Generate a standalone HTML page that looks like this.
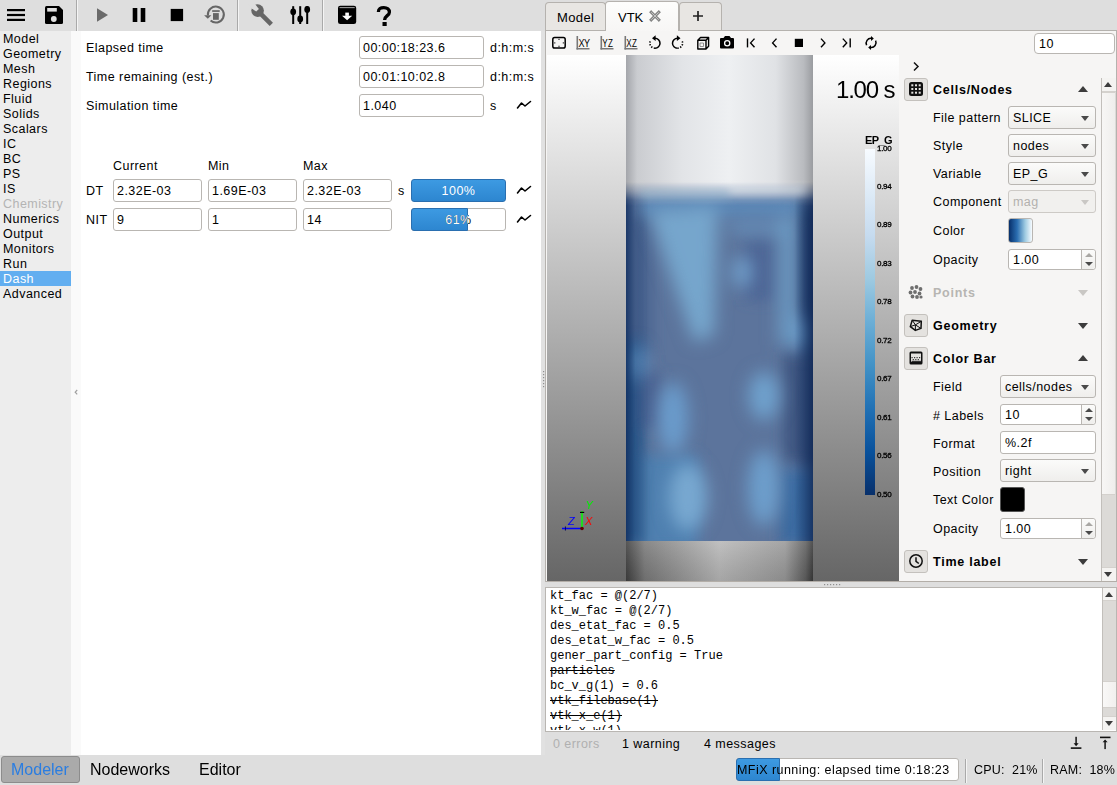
<!DOCTYPE html>
<html><head><meta charset="utf-8">
<style>
*{box-sizing:border-box;margin:0;padding:0}
html,body{width:1117px;height:785px;overflow:hidden;background:#dedede}
body{position:relative;font-family:"Liberation Sans",sans-serif;font-size:12.5px;letter-spacing:0.45px;color:#000}
.a{position:absolute}
.t{position:absolute;white-space:nowrap;line-height:15px;height:15px;margin-top:1px}
.inp{position:absolute;background:#fff;border:1px solid #b9b6b2;border-radius:3px}
.inp span{position:absolute;left:3px;top:4px;line-height:15px;white-space:nowrap}
.combo{position:absolute;border:1px solid #b9b6b2;border-radius:3px;background:linear-gradient(#fbfbfa,#efeeec)}
.combo span{position:absolute;left:4px;top:4px;line-height:15px;white-space:nowrap}
.combo i{position:absolute;right:6px;top:9px;width:0;height:0;border-left:4px solid transparent;border-right:4px solid transparent;border-top:5px solid #4a4a4a}
.spin i.u{position:absolute;right:2px;top:3px;width:0;height:0;border-left:4px solid transparent;border-right:4px solid transparent;border-bottom:4px solid #4a4a4a}
.spin.mx i.u{border-bottom-color:#a9a7a4}
.spin i.d{position:absolute;right:2px;top:12px;width:0;height:0;border-left:4px solid transparent;border-right:4px solid transparent;border-top:4px solid #4a4a4a}
.spin b{position:absolute;right:0;top:0;bottom:0;width:14px;border-left:1px solid #b9b6b2;background:linear-gradient(#fbfbfa,#efeeec);border-radius:0 3px 3px 0}
.hbtn{position:absolute;left:904px;width:24px;height:23px;border:1px solid #c4c1bd;border-radius:3px;background:#e4e2df}
.hdr{position:absolute;left:933px;font-weight:bold;line-height:15px;white-space:nowrap;letter-spacing:0.9px}
.arr-up{position:absolute;width:0;height:0;border-left:5px solid transparent;border-right:5px solid transparent;border-bottom:6px solid #3c3c3c}
.arr-dn{position:absolute;width:0;height:0;border-left:5px solid transparent;border-right:5px solid transparent;border-top:6px solid #3c3c3c}
.mono{font-family:"Liberation Mono",monospace;font-size:12px;letter-spacing:0}
svg{position:absolute;overflow:visible}
</style></head>
<body>
<!-- ===== top toolbar (left) ===== -->
<div class="a" id="tb" style="left:0;top:0;width:545px;height:31px;background:#dedede"></div>
<svg width="1117" height="31" style="left:0;top:0">
 <!-- hamburger -->
 <rect x="7" y="9" width="18" height="2.2" fill="#000"/>
 <rect x="7" y="13.9" width="18" height="2.2" fill="#000"/>
 <rect x="7" y="18.8" width="18" height="2.2" fill="#000"/>
 <!-- save -->
 <path d="M45 7.5 Q45 6 46.5 6 H59 L63 10 V22.5 Q63 24 61.5 24 H46.5 Q45 24 45 22.5 Z" fill="#000"/>
 <rect x="47.2" y="8" width="9.6" height="3.6" fill="#e0e0e0"/>
 <circle cx="53.8" cy="19" r="2.9" fill="#e0e0e0"/>
 <!-- separators -->
 <rect x="76" y="0" width="1" height="31" fill="#a9a9a9"/><rect x="77" y="0" width="1" height="31" fill="#f4f4f4"/>
 <rect x="237" y="0" width="1" height="31" fill="#a9a9a9"/><rect x="238" y="0" width="1" height="31" fill="#f4f4f4"/>
 <rect x="322" y="0" width="1" height="31" fill="#a9a9a9"/><rect x="323" y="0" width="1" height="31" fill="#f4f4f4"/>
 <!-- play -->
 <path d="M97 8.2 L108 15 L97 21.8 Z" fill="#6a6a6a"/>
 <!-- pause -->
 <rect x="132.7" y="8" width="4.6" height="14" fill="#000"/>
 <rect x="140.7" y="8" width="4.6" height="14" fill="#000"/>
 <!-- stop -->
 <rect x="170.7" y="8.9" width="12.4" height="12.2" fill="#000"/>
 <!-- reset -->
 <path d="M207.9 15.4 A8 8 0 1 1 210.6 20.6" fill="none" stroke="#666" stroke-width="2"/>
 <path d="M204.1 15.3 H211.4 L207.8 18.8 Z" fill="#666"/>
 <rect x="213" y="13.1" width="5.8" height="6.7" fill="#666"/>
 <rect x="212.2" y="10.2" width="7.5" height="1.7" fill="#666"/>
 <!-- wrench -->
 <circle cx="257.6" cy="10.6" r="6.3" fill="#666"/>
 <line x1="257.6" y1="10.6" x2="271.3" y2="24.3" stroke="#666" stroke-width="4.6"/>
 <path d="M252.6 1.5 L255.4 4.5 L258.9 8.9 L256.2 11.6 L251.5 8.2 L248.5 5.2 Z" fill="#dedede"/>
 <!-- sliders -->
 <rect x="292.2" y="6.2" width="2" height="17.8" fill="#000"/>
 <rect x="299.2" y="6.2" width="2" height="17.8" fill="#000"/>
 <rect x="306.2" y="6.2" width="2" height="17.8" fill="#000"/>
 <ellipse cx="293.2" cy="11.8" rx="2.9" ry="3.4" fill="#000"/>
 <ellipse cx="300.2" cy="19" rx="2.9" ry="3.4" fill="#000"/>
 <ellipse cx="307.2" cy="9.5" rx="2.9" ry="3.4" fill="#000"/>
 <!-- archive download -->
 <rect x="338" y="5.8" width="18.2" height="18.2" rx="2.3" fill="#000"/>
 <rect x="339.5" y="7.3" width="15.2" height="0.8" fill="#cfcfcf"/>
 <rect x="345.3" y="12.6" width="3.6" height="3.3" fill="#fff"/>
 <path d="M342 15.8 H352.2 L347.1 20.2 Z" fill="#fff"/>
</svg>
<svg width="30" height="31" style="left:370px;top:0"><path d="M8.4 12 C8.4 8.6 10.6 7.6 13.8 7.6 C17.2 7.6 19.4 9.4 19.4 12.2 C19.4 15.6 14.6 15.8 14.6 20" fill="none" stroke="#000" stroke-width="3.3"/><rect x="12.5" y="22" width="4.2" height="4" fill="#000"/></svg>

<!-- ===== left nav ===== -->
<div class="a" style="left:0;top:31px;width:71px;height:724px;background:#ededed"></div>
<div class="a" style="left:71px;top:31px;width:10px;height:724px;background:#fafafa"></div>
<div class="a" style="left:81px;top:31px;width:460px;height:724px;background:#fff"></div>
<div class="t" style="left:3px;top:31px">Model</div>
<div class="t" style="left:3px;top:46px">Geometry</div>
<div class="t" style="left:3px;top:61px">Mesh</div>
<div class="t" style="left:3px;top:76px">Regions</div>
<div class="t" style="left:3px;top:91px">Fluid</div>
<div class="t" style="left:3px;top:106px">Solids</div>
<div class="t" style="left:3px;top:121px">Scalars</div>
<div class="t" style="left:3px;top:136px">IC</div>
<div class="t" style="left:3px;top:151px">BC</div>
<div class="t" style="left:3px;top:166px">PS</div>
<div class="t" style="left:3px;top:181px">IS</div>
<div class="t" style="left:3px;top:196px;color:#b4b4b4">Chemistry</div>
<div class="t" style="left:3px;top:211px">Numerics</div>
<div class="t" style="left:3px;top:226px">Output</div>
<div class="t" style="left:3px;top:241px">Monitors</div>
<div class="t" style="left:3px;top:256px">Run</div>
<div class="a" style="left:0;top:271px;width:71px;height:15px;background:#62aef0"></div><div class="t" style="left:3px;top:271px;color:#fff">Dash</div>
<div class="t" style="left:3px;top:286px">Advanced</div>

<!-- ===== dashboard ===== -->
<div class="t" style="left:86px;top:40px">Elapsed time</div>
<div class="t" style="left:86px;top:69px">Time remaining (est.)</div>
<div class="t" style="left:86px;top:98px">Simulation time</div>
<div class="inp" style="left:359px;top:36px;width:125px;height:23px"><span>00:00:18:23.6</span></div>
<div class="inp" style="left:359px;top:65px;width:125px;height:23px"><span>00:01:10:02.8</span></div>
<div class="inp" style="left:359px;top:94px;width:125px;height:23px"><span>1.040</span></div>
<div class="t" style="left:490px;top:40px">d:h:m:s</div>
<div class="t" style="left:490px;top:69px">d:h:m:s</div>
<div class="t" style="left:490px;top:98px">s</div>
<div class="t" style="left:113px;top:158px">Current</div>
<div class="t" style="left:208px;top:158px">Min</div>
<div class="t" style="left:303px;top:158px">Max</div>
<div class="t" style="left:86px;top:183px">DT</div>
<div class="t" style="left:86px;top:212px">NIT</div>
<div class="inp" style="left:113px;top:179px;width:89px;height:23px"><span>2.32E-03</span></div>
<div class="inp" style="left:208px;top:179px;width:89px;height:23px"><span>1.69E-03</span></div>
<div class="inp" style="left:303px;top:179px;width:89px;height:23px"><span>2.32E-03</span></div>
<div class="inp" style="left:113px;top:208px;width:89px;height:23px"><span>9</span></div>
<div class="inp" style="left:208px;top:208px;width:89px;height:23px"><span>1</span></div>
<div class="inp" style="left:303px;top:208px;width:89px;height:23px"><span>14</span></div>
<div class="t" style="left:398px;top:183px">s</div>
<div class="a" style="left:411px;top:179px;width:95px;height:23px;border:1px solid #2a6fb0;border-radius:3px;background:linear-gradient(#3d9ae2,#2d86d0)"></div>
<div class="t" style="left:411px;top:183px;width:95px;text-align:center;color:#fff">100%</div>
<div class="a" style="left:411px;top:208px;width:95px;height:23px;border:1px solid #b9b6b2;border-radius:3px;background:#fff"></div>
<div class="a" style="left:411px;top:208px;width:57px;height:23px;border:1px solid #2a6fb0;border-radius:3px 0 0 3px;background:linear-gradient(#3d9ae2,#2d86d0)"></div>
<div class="t" style="left:411px;top:212px;width:95px;text-align:center;color:#000">61%</div>
<div class="a" style="left:411px;top:208px;width:57px;height:23px;overflow:hidden"><div class="t" style="left:0;top:4px;width:95px;text-align:center;color:#fff">61%</div></div>
<svg width="20" height="12" style="left:515px;top:99px"><path d="M2.5 9 L6.5 4 L10 7 L15.5 2.5" fill="none" stroke="#000" stroke-width="1.6" stroke-linejoin="round" stroke-linecap="round"/></svg>
<svg width="20" height="12" style="left:515px;top:184px"><path d="M2.5 9 L6.5 4 L10 7 L15.5 2.5" fill="none" stroke="#000" stroke-width="1.6" stroke-linejoin="round" stroke-linecap="round"/></svg>
<svg width="20" height="12" style="left:515px;top:213px"><path d="M2.5 9 L6.5 4 L10 7 L15.5 2.5" fill="none" stroke="#000" stroke-width="1.6" stroke-linejoin="round" stroke-linecap="round"/></svg>
<svg width="6" height="8" style="left:73px;top:389px"><path d="M4.2 1 L2.2 3.2 L4.2 5.4" fill="none" stroke="#a0a0a0" stroke-width="1.2"/></svg>
<!-- splitter -->
<div class="a" style="left:541px;top:31px;width:4px;height:724px;background:#e1e1e1"></div>

<!-- ===== tab pane ===== -->
<div class="a" style="left:545px;top:30px;width:572px;height:552px;background:#f6f5f4;border:1px solid #b5b2ae"></div>
<!-- vtk view -->
<svg width="352" height="526" style="left:547px;top:55px;overflow:hidden">
<defs>
 <linearGradient id="bgG" x1="0" y1="0" x2="0" y2="1"><stop offset="0" stop-color="#ffffff"/><stop offset="1" stop-color="#666666"/></linearGradient>
 <linearGradient id="cylT" x1="0" y1="0" x2="1" y2="0">
  <stop offset="0" stop-color="#a4a6ab"/><stop offset="0.06" stop-color="#caccd0"/><stop offset="0.3" stop-color="#e2e4e7"/>
  <stop offset="0.55" stop-color="#eef0f2"/><stop offset="0.8" stop-color="#e0e2e5"/><stop offset="0.95" stop-color="#b9bbbf"/><stop offset="1" stop-color="#9a9ca0"/></linearGradient>
 <linearGradient id="cylB" x1="0" y1="0" x2="1" y2="0">
  <stop offset="0" stop-color="#404040"/><stop offset="0.1" stop-color="#7a7a7a"/><stop offset="0.5" stop-color="#b8b8b8"/>
  <stop offset="0.85" stop-color="#9a9a9a"/><stop offset="0.96" stop-color="#606060"/><stop offset="1" stop-color="#3a3a3a"/></linearGradient>
 <linearGradient id="cylBv" x1="0" y1="0" x2="0" y2="1"><stop offset="0" stop-color="#fff" stop-opacity="0.12"/><stop offset="1" stop-color="#000" stop-opacity="0.1"/></linearGradient>
 <linearGradient id="edge" x1="0" y1="0" x2="1" y2="0">
  <stop offset="0" stop-color="#0c2a5c" stop-opacity="0.8"/><stop offset="0.05" stop-color="#0c2a5c" stop-opacity="0.2"/>
  <stop offset="0.12" stop-color="#0c2a5c" stop-opacity="0"/><stop offset="0.9" stop-color="#0c2a5c" stop-opacity="0"/><stop offset="1" stop-color="#0a2250" stop-opacity="0.75"/></linearGradient>
 <linearGradient id="cbar" x1="0" y1="0" x2="0" y2="1">
  <stop offset="0" stop-color="#f7fbff"/><stop offset="0.125" stop-color="#deebf7"/><stop offset="0.25" stop-color="#c6dbef"/>
  <stop offset="0.375" stop-color="#9ecae1"/><stop offset="0.5" stop-color="#6baed6"/><stop offset="0.625" stop-color="#4292c6"/>
  <stop offset="0.75" stop-color="#2171b5"/><stop offset="0.875" stop-color="#08519c"/><stop offset="1" stop-color="#08306b"/></linearGradient>
 <filter id="bl" x="-50%" y="-50%" width="200%" height="200%"><feGaussianBlur stdDeviation="8.5"/></filter>
 <filter id="bl2" x="-50%" y="-50%" width="200%" height="200%"><feGaussianBlur stdDeviation="4"/></filter>
 <filter id="bl3" x="-50%" y="-50%" width="200%" height="200%"><feGaussianBlur stdDeviation="7"/></filter>
 <clipPath id="blueClip"><rect x="626" y="150" width="187" height="391"/></clipPath>
 <linearGradient id="tmG" gradientUnits="userSpaceOnUse" x1="0" y1="182" x2="0" y2="206"><stop offset="0" stop-color="#000"/><stop offset="0.4" stop-color="#666"/><stop offset="0.75" stop-color="#ddd"/><stop offset="1" stop-color="#fff"/></linearGradient>
 <mask id="topMask" maskUnits="userSpaceOnUse" x="547" y="55" width="352" height="526"><rect x="547" y="55" width="352" height="526" fill="url(#tmG)"/></mask>
</defs>
<g transform="translate(-547,-55)">
 <rect x="547" y="55" width="352" height="526" fill="url(#bgG)"/>
 <rect x="626" y="55" width="187" height="160" fill="url(#cylT)"/>
 <g clip-path="url(#blueClip)" mask="url(#topMask)">
  <rect x="626" y="150" width="187" height="391" fill="#5c749c"/>
  <g filter="url(#bl3)">
   <rect x="640" y="198" width="160" height="18" fill="#5b89b9"/>
   <rect x="630" y="215" width="22" height="140" fill="#4a6490"/>
   <rect x="620" y="455" width="78" height="95" fill="#4f80b0"/>
   <rect x="620" y="340" width="24" height="205" fill="#2f5f92"/>
   <rect x="640" y="372" width="20" height="55" fill="#4a6090"/>
   <rect x="745" y="240" width="30" height="60" fill="#4e6696"/>
   <rect x="800" y="205" width="25" height="260" fill="#2a4472"/>
   <rect x="780" y="470" width="40" height="75" fill="#3a6aa0"/>
   <rect x="784" y="352" width="30" height="110" fill="#3e5580"/>
  </g>
  <g filter="url(#bl)">
   <path d="M648 210 L718 205 L714 335 L694 342 Z" fill="#76a6cc"/>
   <ellipse cx="636" cy="362" rx="10" ry="18" fill="#6a9ccc" opacity="0.8"/>
   <ellipse cx="802" cy="334" rx="11" ry="18" fill="#6a9ccc" opacity="0.8"/>
   <rect x="730" y="222" width="62" height="11" fill="#6c9cc8" opacity="0.8"/>
   <rect x="779" y="215" width="17" height="130" fill="#6d9fc8" opacity="0.9"/>
   <ellipse cx="742" cy="272" rx="9" ry="16" fill="#72a3cf"/>
   <ellipse cx="673" cy="418" rx="15" ry="36" fill="#6a9ccc"/>
   <ellipse cx="688" cy="497" rx="19" ry="34" fill="#78a8d0"/>
   <ellipse cx="764" cy="396" rx="15" ry="24" fill="#70a2ce"/>
   <ellipse cx="764" cy="488" rx="16" ry="38" fill="#6d9fcc"/>
  </g>
  <rect x="626" y="150" width="187" height="391" fill="url(#edge)"/>
 </g>
 <g clip-path="url(#blueClip)" filter="url(#bl2)">
   <rect x="640" y="190" width="90" height="8" fill="#9cc4dc" opacity="0.45"/>
   <rect x="730" y="186" width="75" height="9" fill="#e4ecf1" opacity="0.5"/>
 </g>
 <rect x="626" y="541" width="187" height="40" fill="url(#cylB)"/>
 <rect x="626" y="541" width="187" height="40" fill="url(#cylBv)"/>
 <rect x="865" y="149" width="10" height="346" fill="url(#cbar)"/>
 <g font-family="Liberation Sans" fill="#000">
 <text x="836" y="98" font-size="24" letter-spacing="-1.2">1.00 s</text>
 <text x="865" y="144" font-size="11" font-weight="bold" letter-spacing="-0.6">EP_G</text>
 <text x="877" y="150.5" font-size="8" letter-spacing="-0.3" stroke="#000" stroke-width="0.3">1.00</text>
 <text x="877" y="189.0" font-size="8" letter-spacing="-0.3" stroke="#000" stroke-width="0.3">0.94</text>
 <text x="877" y="227.4" font-size="8" letter-spacing="-0.3" stroke="#000" stroke-width="0.3">0.89</text>
 <text x="877" y="265.9" font-size="8" letter-spacing="-0.3" stroke="#000" stroke-width="0.3">0.83</text>
 <text x="877" y="304.4" font-size="8" letter-spacing="-0.3" stroke="#000" stroke-width="0.3">0.78</text>
 <text x="877" y="342.9" font-size="8" letter-spacing="-0.3" stroke="#000" stroke-width="0.3">0.72</text>
 <text x="877" y="381.3" font-size="8" letter-spacing="-0.3" stroke="#000" stroke-width="0.3">0.67</text>
 <text x="877" y="419.8" font-size="8" letter-spacing="-0.3" stroke="#000" stroke-width="0.3">0.61</text>
 <text x="877" y="458.3" font-size="8" letter-spacing="-0.3" stroke="#000" stroke-width="0.3">0.56</text>
 <text x="877" y="496.7" font-size="8" letter-spacing="-0.3" stroke="#000" stroke-width="0.3">0.50</text>
 </g>
 <!-- axes -->
 <line x1="582" y1="528.5" x2="582" y2="511" stroke="#00ff00" stroke-width="1.5"/>
 <line x1="580" y1="512.4" x2="584.2" y2="512.4" stroke="#000" stroke-width="1.2"/>
 <line x1="562" y1="528.5" x2="582" y2="528.5" stroke="#0000ff" stroke-width="1.5"/>
 <line x1="565.4" y1="526.5" x2="565.4" y2="530.5" stroke="#000060" stroke-width="1"/>
 <circle cx="582" cy="528.5" r="1.8" fill="#600000"/>
 <g font-family="Liberation Sans" font-size="11" font-style="italic">
 <text x="585.5" y="508.5" fill="#00ee00">Y</text>
 <text x="568" y="524.5" fill="#0000ff">Z</text>
 <text x="585" y="524.5" fill="#ff0000">X</text>
 </g>
</g>
</svg>
<!-- tabs -->
<div class="a" style="left:545px;top:2px;width:61px;height:28px;background:#e8e6e3;border:1px solid #b5b2ae;border-bottom:none;border-radius:4px 4px 0 0"></div>
<div class="t" style="left:557px;top:9px;font-size:13px;letter-spacing:0.4px">Model</div>
<div class="a" style="left:679px;top:2px;width:43px;height:28px;background:#e8e6e3;border:1px solid #b5b2ae;border-bottom:none;border-radius:4px 4px 0 0"></div>
<div class="a" style="left:605px;top:1px;width:74px;height:30px;background:linear-gradient(#fdfdfc,#f7f6f5);border:1px solid #b5b2ae;border-bottom:none;border-radius:4px 4px 0 0"></div>
<div class="t" style="left:618px;top:9px;font-size:13px;letter-spacing:0px">VTK</div>
<svg width="14" height="14" style="left:648px;top:9px"><path d="M3.2 3.2 L10.8 10.8 M10.8 3.2 L3.2 10.8" stroke="#858585" stroke-width="3" stroke-linecap="square"/><path d="M3.2 3.2 L10.8 10.8 M10.8 3.2 L3.2 10.8" stroke="#c8c8c8" stroke-width="0.9"/></svg>
<svg width="14" height="14" style="left:691px;top:9px"><path d="M7 2 V12 M2 7 H12" stroke="#222" stroke-width="1.7"/></svg>
<!-- vtk toolbar -->
<svg width="340" height="20" style="left:546px;top:32px">
 <rect x="6.8" y="5.6" width="12.4" height="10.4" rx="1.8" fill="none" stroke="#000" stroke-width="1.5"/>
 <rect x="12.5" y="6.8" width="1" height="1.2" fill="#000"/><rect x="12.5" y="13.7" width="1" height="1.2" fill="#000"/>
 <rect x="8.3" y="10.3" width="1" height="1.2" fill="#000"/><rect x="16.8" y="10.3" width="1" height="1.2" fill="#000"/>
 <g fill="#787878"><rect x="30.5" y="4" width="1.6" height="13.5"/><rect x="30.5" y="16" width="13" height="1.5"/>
 <rect x="54.5" y="4" width="1.6" height="13.5"/><rect x="54.5" y="16" width="13" height="1.5"/>
 <rect x="78.5" y="4" width="1.6" height="13.5"/><rect x="78.5" y="16" width="13" height="1.5"/></g>
 <text x="32.4" y="14.5" font-family="Liberation Sans" font-size="10" letter-spacing="-0.6" transform="scale(1,1)" textLength="11" lengthAdjust="spacingAndGlyphs">XY</text>
 <text x="56.2" y="14.5" font-family="Liberation Sans" font-size="10" textLength="11" lengthAdjust="spacingAndGlyphs">YZ</text>
 <text x="80.2" y="14.5" font-family="Liberation Sans" font-size="10" textLength="11" lengthAdjust="spacingAndGlyphs">XZ</text>
 <!-- rotate ccw -->
 <path d="M109 6.2 A5 5 0 0 1 109 16.2" fill="none" stroke="#000" stroke-width="1.5"/>
 <path d="M109 16.2 A5 5 0 0 1 104.4 9" fill="none" stroke="#000" stroke-width="1.6" stroke-dasharray="1.3 1.5"/>
 <path d="M106 6.2 L109.6 3.3 L109.6 9.1 Z" fill="#000"/>
 <!-- rotate cw -->
 <path d="M131.5 6.2 A5 5 0 0 0 131.5 16.2" fill="none" stroke="#000" stroke-width="1.5"/>
 <path d="M131.5 16.2 A5 5 0 0 0 136.1 9" fill="none" stroke="#000" stroke-width="1.6" stroke-dasharray="1.3 1.5"/>
 <path d="M134.5 6.2 L130.9 3.3 L130.9 9.1 Z" fill="#000"/>
 <!-- cube -->
 <path d="M151.8 8.2 L154.5 5.5 H162.6 V14.3 L160 17 H151.8 Z M151.8 8.2 H160 V17 M160 8.2 L162.6 5.5" fill="none" stroke="#000" stroke-width="1.4" stroke-linejoin="round"/>
 <path d="M154 11 H157.5 V14.5 H154 Z" fill="none" stroke="#777" stroke-width="0.8"/>
 <!-- camera -->
 <path d="M174 7 Q174 6 175 6 H177.5 L179 4 H183.5 L185 6 H187 Q188 6 188 7 V15.5 Q188 16.5 187 16.5 H175 Q174 16.5 174 15.5 Z" fill="#000"/>
 <circle cx="181.2" cy="11.2" r="2.6" fill="none" stroke="#fff" stroke-width="1.3"/>
 <!-- first / prev / stop / next / last -->
 <rect x="200.8" y="6.4" width="1.4" height="9" fill="#000"/>
 <path d="M208.5 6.6 L204.6 10.9 L208.5 15.2" fill="none" stroke="#000" stroke-width="1.4"/>
 <path d="M230.5 6.6 L226.6 10.9 L230.5 15.2" fill="none" stroke="#000" stroke-width="1.4"/>
 <rect x="248.8" y="6.8" width="8.2" height="8.2" fill="#000"/>
 <path d="M275 6.6 L278.9 10.9 L275 15.2" fill="none" stroke="#000" stroke-width="1.4"/>
 <path d="M296.8 6.6 L300.7 10.9 L296.8 15.2" fill="none" stroke="#000" stroke-width="1.4"/>
 <rect x="303.5" y="6.4" width="1.4" height="9" fill="#000"/>
 <!-- refresh -->
 <path d="M320.6 13.2 A4.8 4.8 0 0 1 325.4 6.4" fill="none" stroke="#000" stroke-width="1.5"/>
 <path d="M329.6 8.6 A4.8 4.8 0 0 1 324.6 15.4" fill="none" stroke="#000" stroke-width="1.5"/>
 <path d="M325 3.9 L327.8 6.4 L325 8.9 Z" fill="#000"/>
 <path d="M325 12.9 L322.2 15.4 L325 17.9 Z" fill="#000"/>
</svg>
<div class="inp" style="left:1034px;top:33px;width:81px;height:21px;border-radius:4px"><span style="top:3px;left:4px">10</span></div>


<!-- right panel -->
<svg width="8" height="10" style="left:912px;top:61px"><path d="M2 1.5 L6 5.5 L2 9.5" fill="none" stroke="#111" stroke-width="1.5"/></svg>
<div class="a" style="left:1101px;top:78px;width:15px;height:503px;background:#dcdad7;border-left:1px solid #c2bfbb"></div>
<div class="a" style="left:1102px;top:92px;width:13px;height:403px;background:linear-gradient(90deg,#f7f6f5,#efeeec);border-top:1px solid #d4d1cd;border-bottom:1px solid #d4d1cd"></div>
<div class="a" style="left:1102px;top:78px;width:14px;height:14px;background:#f4f3f1;border-bottom:1px solid #d4d1cd"></div>
<div class="arr-up" style="left:1104px;top:82px;border-left-width:4px;border-right-width:4px;border-bottom-width:5px"></div>
<div class="a" style="left:1102px;top:567px;width:14px;height:14px;background:#f4f3f1;border-top:1px solid #d4d1cd"></div>
<div class="arr-dn" style="left:1104px;top:572px;border-left-width:4px;border-right-width:4px;border-top-width:5px"></div>
<div class="hbtn" style="top:78px"></div>
<svg width="16" height="16" style="left:908px;top:81px"><rect x="1" y="1" width="14" height="14" rx="2.5" fill="#111"/>
<g fill="#e4e2df"><rect x="3.3" y="3.3" width="2" height="2"/><rect x="7" y="3.3" width="2" height="2"/><rect x="10.7" y="3.3" width="2" height="2"/>
<rect x="3.3" y="7" width="2" height="2"/><rect x="7" y="7" width="2" height="2"/><rect x="10.7" y="7" width="2" height="2"/>
<rect x="3.3" y="10.7" width="2" height="2"/><rect x="7" y="10.7" width="2" height="2"/><rect x="10.7" y="10.7" width="2" height="2"/></g></svg>
<div class="t" style="left:933px;top:82px;font-weight:bold;letter-spacing:0.75px">Cells/Nodes</div>
<div class="arr-up" style="left:1078px;top:86px"></div>
<div class="t" style="left:933px;top:110px;">File pattern</div>
<div class="combo" style="left:1008px;top:106px;width:88px;height:23px;"><span style="">SLICE</span><i style=""></i></div>
<div class="t" style="left:933px;top:138px;">Style</div>
<div class="combo" style="left:1008px;top:134px;width:88px;height:23px;"><span style="">nodes</span><i style=""></i></div>
<div class="t" style="left:933px;top:166px;">Variable</div>
<div class="combo" style="left:1008px;top:162px;width:88px;height:23px;"><span style="">EP_G</span><i style=""></i></div>
<div class="t" style="left:933px;top:194px;">Component</div>
<div class="combo" style="left:1008px;top:190px;width:88px;height:23px;background:#f1f0ee;border-color:#cdcac6;"><span style="color:#b3b1ae;">mag</span><i style="border-top-color:#c9c7c4;"></i></div>
<div class="t" style="left:933px;top:223px;">Color</div>
<div class="a" style="left:1008px;top:218px;width:25px;height:25px;border:1px solid #b9b6b2;border-radius:3px;background:linear-gradient(90deg,#08306b,#2a6db0 35%,#9ecae1 70%,#f7fbff)"></div>
<div class="t" style="left:933px;top:252px;">Opacity</div>
<div class="inp spin mx" style="left:1008px;top:249px;width:88px;height:21px"><span style="left:4px;top:3px">1.00</span><b></b><i class="u"></i><i class="d"></i></div>
<svg width="16" height="16" style="left:908px;top:284px" fill="#6e6e6e"><circle cx="4" cy="4" r="1.9"/><circle cx="8.5" cy="3" r="1.9"/><circle cx="12.5" cy="5" r="1.9"/>
<circle cx="2.5" cy="8.5" r="1.9"/><circle cx="7" cy="8" r="1.9"/><circle cx="11.5" cy="9.5" r="1.9"/><circle cx="4.5" cy="12.5" r="1.9"/><circle cx="9" cy="13" r="1.9"/><circle cx="13" cy="13" r="1.6"/></svg>
<div class="t" style="left:933px;top:285px;font-weight:bold;letter-spacing:0.75px;color:#b7b5b2">Points</div>
<div class="arr-dn" style="left:1078px;top:290px;border-top-color:#c9c7c4"></div>
<div class="hbtn" style="top:314px"></div>
<svg width="16" height="16" style="left:908px;top:317px"><path d="M4.2 3.2 L13.3 4.3 L13 11.4 L7.4 13.4 L2.3 9.6 Z" fill="none" stroke="#111" stroke-width="1.5" stroke-linejoin="round"/><path d="M7.4 7.9 L4.2 3.2 M7.4 7.9 L13.3 4.3 M7.4 7.9 L13 11.4 M7.4 7.9 L7.4 13.4 M7.4 7.9 L2.3 9.6" stroke="#111" stroke-width="1"/></svg>
<div class="t" style="left:933px;top:318px;font-weight:bold;letter-spacing:0.75px">Geometry</div>
<div class="arr-dn" style="left:1078px;top:323px"></div>
<div class="hbtn" style="top:347px"></div>
<svg width="16" height="16" style="left:908px;top:350px"><rect x="1.5" y="1.5" width="13" height="13" rx="1.5" fill="#111"/><rect x="3" y="3.5" width="10" height="8.5" fill="#e4e2df"/><g fill="#333"><rect x="3.5" y="7" width="1.2" height="1.2"/><rect x="6" y="7" width="1.2" height="1.2"/><rect x="8.5" y="7" width="1.2" height="1.2"/><rect x="11" y="7" width="1.2" height="1.2"/><rect x="4.7" y="9" width="1.2" height="1.2"/><rect x="7.2" y="9" width="1.2" height="1.2"/><rect x="9.7" y="9" width="1.2" height="1.2"/><rect x="3.5" y="10.8" width="9.5" height="1.2"/></g></svg>
<div class="t" style="left:933px;top:351px;font-weight:bold;letter-spacing:0.75px">Color Bar</div>
<div class="arr-up" style="left:1078px;top:355px"></div>
<div class="t" style="left:933px;top:379px;">Field</div>
<div class="combo" style="left:1000px;top:375px;width:96px;height:23px;"><span style="">cells/nodes</span><i style=""></i></div>
<div class="t" style="left:933px;top:408px;"># Labels</div>
<div class="inp spin" style="left:1000px;top:404px;width:96px;height:21px"><span style="left:4px;top:3px">10</span><b></b><i class="u"></i><i class="d"></i></div>
<div class="t" style="left:933px;top:436px;">Format</div>
<div class="inp" style="left:1000px;top:431px;width:96px;height:23px"><span style="left:4px">%.2f</span></div>
<div class="t" style="left:933px;top:464px;">Position</div>
<div class="combo" style="left:1000px;top:459px;width:96px;height:23px;"><span style="">right</span><i style=""></i></div>
<div class="t" style="left:933px;top:492px;">Text Color</div>
<div class="a" style="left:1000px;top:487px;width:25px;height:25px;border:1px solid #555;border-radius:3px;background:#000"></div>
<div class="t" style="left:933px;top:521px;">Opacity</div>
<div class="inp spin mx" style="left:1000px;top:518px;width:96px;height:21px"><span style="left:4px;top:3px">1.00</span><b></b><i class="u"></i><i class="d"></i></div>
<div class="hbtn" style="top:550px"></div>
<svg width="16" height="16" style="left:908px;top:553px"><circle cx="8" cy="8" r="6.2" fill="none" stroke="#111" stroke-width="1.5"/><path d="M8 4.2 V8.3 L10.8 10.5" fill="none" stroke="#111" stroke-width="1.5"/></svg>
<div class="t" style="left:933px;top:554px;font-weight:bold;letter-spacing:0.75px">Time label</div>
<div class="arr-dn" style="left:1078px;top:559px"></div>
<!-- ===== console ===== -->
<div class="a" style="left:545px;top:587px;width:572px;height:145px;background:#fff;border:1px solid #b9b6b2"></div>
<div class="a" style="left:546px;top:588px;width:556px;height:142px;overflow:hidden">
<div class="t mono" style="left:4px;top:1px;margin-top:0;">kt_fac = @(2/7)</div>
<div class="t mono" style="left:4px;top:16px;margin-top:0;">kt_w_fac = @(2/7)</div>
<div class="t mono" style="left:4px;top:31px;margin-top:0;">des_etat_fac = 0.5</div>
<div class="t mono" style="left:4px;top:46px;margin-top:0;">des_etat_w_fac = 0.5</div>
<div class="t mono" style="left:4px;top:61px;margin-top:0;">gener_part_config = True</div>
<div class="t mono" style="left:4px;top:76px;margin-top:0;text-decoration:line-through;">particles</div>
<div class="t mono" style="left:4px;top:91px;margin-top:0;">bc_v_g(1) = 0.6</div>
<div class="t mono" style="left:4px;top:106px;margin-top:0;text-decoration:line-through;">vtk_filebase(1)</div>
<div class="t mono" style="left:4px;top:121px;margin-top:0;text-decoration:line-through;">vtk_x_e(1)</div>
<div class="t mono" style="left:4px;top:136px;margin-top:0;text-decoration:line-through;">vtk_x_w(1)</div>
</div>
<div class="a" style="left:1102px;top:588px;width:14px;height:142px;background:#dcdad7;border-left:1px solid #c2bfbb"></div>
<div class="a" style="left:1103px;top:588px;width:13px;height:13px;background:#f4f3f1;border-bottom:1px solid #d4d1cd"></div>
<div class="arr-up" style="left:1105px;top:592px;border-left-width:4px;border-right-width:4px;border-bottom-width:5px"></div>
<div class="a" style="left:1103px;top:681px;width:13px;height:27px;background:linear-gradient(90deg,#f9f8f7,#f1f0ee);border-top:1px solid #d4d1cd;border-bottom:1px solid #d4d1cd"></div>
<div class="a" style="left:1103px;top:716px;width:13px;height:14px;background:#f4f3f1;border-top:1px solid #d4d1cd"></div>
<div class="arr-dn" style="left:1105px;top:721px;border-left-width:4px;border-right-width:4px;border-top-width:5px"></div>
<div class="t" style="left:553px;top:736px;color:#b0b0b0">0 errors</div>
<div class="t" style="left:622px;top:736px">1 warning</div>
<div class="t" style="left:704px;top:736px">4 messages</div>
<svg width="60" height="20" style="left:1060px;top:732px"><rect x="15.3" y="4.8" width="1.6" height="7.5" fill="#222"/><path d="M13.6 11.2 H18.6 L16.1 14.2 Z" fill="#111"/><rect x="10.8" y="15.3" width="10.6" height="1.6" fill="#111"/>
<rect x="40" y="4.6" width="10.5" height="1.6" fill="#111"/><path d="M42.6 10.3 H47.6 L45.1 7.6 Z" fill="#111"/><rect x="44.3" y="9.5" width="1.6" height="7.6" fill="#222"/></svg>

<svg width="1117" height="785" style="left:0;top:0;pointer-events:none">
<g fill="#8f8f8f"><rect x="824" y="584" width="1.2" height="1.2"/><rect x="827" y="584" width="1.2" height="1.2"/><rect x="830" y="584" width="1.2" height="1.2"/><rect x="833" y="584" width="1.2" height="1.2"/><rect x="836" y="584" width="1.2" height="1.2"/><rect x="839" y="584" width="1.2" height="1.2"/><rect x="543" y="371" width="1.2" height="1.2"/><rect x="543" y="374" width="1.2" height="1.2"/><rect x="543" y="377" width="1.2" height="1.2"/><rect x="543" y="380" width="1.2" height="1.2"/><rect x="543" y="383" width="1.2" height="1.2"/><rect x="543" y="386" width="1.2" height="1.2"/></g>
<rect x="546" y="581" width="571" height="1" fill="#b3aea8"/>
</svg>
<!-- ===== status bar ===== -->
<div class="a" style="left:0;top:755px;width:1117px;height:30px;background:#dedede"></div>
<div class="a" style="left:1px;top:756px;width:79px;height:27px;background:#aaaaaa;border:1px solid #8c8c8c;border-radius:3px"></div>
<div class="t" style="left:11px;top:760px;font-size:16px;letter-spacing:0;line-height:18px;height:18px;color:#2a7de1">Modeler</div>
<div class="t" style="left:90px;top:760px;font-size:16px;letter-spacing:0;line-height:18px;height:18px">Nodeworks</div>
<div class="t" style="left:199px;top:760px;font-size:16px;letter-spacing:0;line-height:18px;height:18px">Editor</div>
<div class="a" style="left:736px;top:758px;width:223px;height:23px;background:#fff;border:1px solid #b9b6b2;border-radius:3px"></div>
<div class="a" style="left:736px;top:758px;width:44px;height:23px;background:linear-gradient(#3d9ae2,#2d86d0);border:1px solid #2a6fb0;border-radius:3px 0 0 3px"></div>
<div class="t" style="left:737px;top:762px">MFiX running: elapsed time 0:18:23</div>
<div class="a" style="left:965px;top:759px;width:1px;height:24px;background:#a9a9a9"></div><div class="a" style="left:966px;top:759px;width:1px;height:24px;background:#f4f4f4"></div>
<div class="a" style="left:1042px;top:759px;width:1px;height:24px;background:#a9a9a9"></div><div class="a" style="left:1043px;top:759px;width:1px;height:24px;background:#f4f4f4"></div>
<div class="t" style="left:974px;top:762px;letter-spacing:0.2px">CPU:&nbsp; 21%</div>
<div class="t" style="left:1050px;top:762px;letter-spacing:0.2px">RAM:&nbsp; 18%</div>

</body></html>
